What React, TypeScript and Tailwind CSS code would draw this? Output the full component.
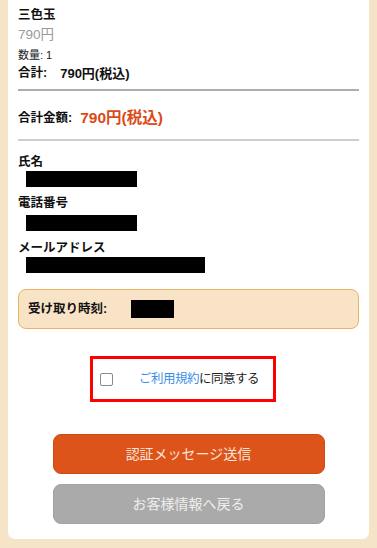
import React from "react";

export default function App() {
  return (
    <div
      className="w-[377px] h-[548px] bg-[#f5e4c8] px-[8px] pb-[9px] overflow-hidden"
      style={{ fontFamily: '"Liberation Sans", "Noto Sans CJK JP", sans-serif' }}
    >
      <div className="bg-white rounded-b-[7px] px-[10px] pt-[5px] pb-[15px] flex flex-col text-[#111]">
        <div className="h-[20px] flex items-center text-[12.5px] font-bold leading-none">三色玉</div>
        <div className="h-[20px] flex items-center text-[13.5px] text-[#9a9a9a] leading-none">790円</div>
        <div className="h-[20px] flex items-center text-[11px] text-[#222] leading-none">数量: 1</div>
        <div className="h-[17px] flex items-center text-[12.5px] font-bold leading-none">
          <span>合計:</span>
          <span className="ml-[13px] text-[13px]">790円(税込)</span>
        </div>
        <div className="mt-[7px] h-[2px] bg-[#adadad]" />
        <div className="mt-[16px] h-[22px] flex items-center font-bold leading-none">
          <span className="text-[12.5px]">合計金額:</span>
          <span className="ml-[8px] text-[15.5px] text-[#dc4a17]">790円(税込)</span>
        </div>
        <div className="mt-[10px] h-[2px] bg-[#cdcdcd]" />

        <div className="mt-[12px] h-[18px] flex items-center text-[12.5px] font-bold leading-none">氏名</div>
        <div className="ml-[8px] w-[111px] h-[16px] bg-black" />
        <div className="mt-[7px] h-[18px] flex items-center text-[12.5px] font-bold leading-none">電話番号</div>
        <div className="mt-[3px] ml-[8px] w-[111px] h-[16px] bg-black" />
        <div className="mt-[8px] h-[18px] flex items-center text-[12.5px] font-bold leading-none">メールアドレス</div>
        <div className="ml-[8px] w-[179px] h-[16px] bg-black" />

        <div className="mt-[16px] h-[40px] rounded-[8px] border-[1.5px] border-[#e9b366] bg-[#f9e3c6] flex items-center pl-[9px]">
          <span className="w-[103px] text-[12.5px] font-bold leading-none">受け取り時刻:</span>
          <span className="w-[43px] h-[18px] bg-black" />
        </div>

        <div className="mt-[27px] ml-[72px] w-[186px] h-[46px] border-[3px] border-[#ff0000] flex items-center pl-[7px]">
          <span className="w-[13px] h-[13px] border-[1.5px] border-[#8a8a8a] rounded-[2px] bg-white" />
          <span className="ml-[26px] text-[12.5px] tracking-[-0.5px] leading-none">
            <span className="text-[#3a8ee6]">ご利用規約</span>
            <span className="text-[#222]">に同意する</span>
          </span>
        </div>

        <div className="mt-[32px] mx-auto w-[272px] h-[40px] rounded-[8px] bg-[#dc5419] border border-[#d04a12] flex items-center justify-center text-[14px] text-[#fbe3d8] leading-none">
          認証メッセージ送信
        </div>
        <div className="mt-[10px] mx-auto w-[272px] h-[40px] rounded-[8px] bg-[#aaaaaa] border border-[#a2a2a2] flex items-center justify-center text-[14px] text-[#eeeeee] leading-none">
          お客様情報へ戻る
        </div>
      </div>
    </div>
  );
}
